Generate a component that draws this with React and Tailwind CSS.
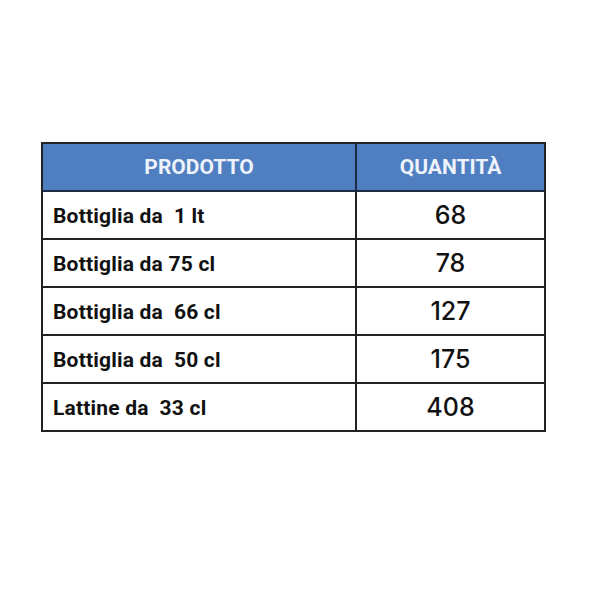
import React from 'react';

const rows = [
  { name: 'Bottiglia da  1 lt', qty: '68' },
  { name: 'Bottiglia da 75 cl', qty: '78' },
  { name: 'Bottiglia da  66 cl', qty: '127' },
  { name: 'Bottiglia da  50 cl', qty: '175' },
  { name: 'Lattine da  33 cl', qty: '408' },
];

const App = () => {
  return (
    <div className="w-[600px] h-[600px] bg-white pt-[142px] pl-[41px]">
      <div className="w-[505px] border-2 border-[#222] grid grid-cols-[314px_1fr]">
        <div className="h-[48px] pt-[2px] bg-[#4f7fc0] border-r-2 border-b-2 border-[#1d2a44] flex items-center justify-center text-[#eef3fb] text-[21px] font-bold font-['Roboto',sans-serif] whitespace-pre">
          PRODOTTO
        </div>
        <div className="h-[48px] pt-[2px] bg-[#4f7fc0] border-b-2 border-[#1d2a44] flex items-center justify-center text-[#eef3fb] text-[21px] font-bold font-['Roboto',sans-serif]">
          QUANTITÀ
        </div>
        {rows.map((row, i) => {
          const last = i === rows.length - 1;
          return (
            <React.Fragment key={row.name}>
              <div
                className={`pt-[3px] border-r-2 border-[#222] flex items-center pl-[10px] text-[#111] text-[21px] font-bold font-['Roboto',sans-serif] tracking-[0.2px] whitespace-pre ${
                  last ? 'h-[46px]' : 'h-[48px] border-b-2'
                }`}
              >
                {row.name}
              </div>
              <div
                className={`pt-[2px] border-[#222] flex items-center justify-center text-[#111] text-[25px] font-medium font-['Inter',sans-serif] ${
                  last ? 'h-[46px]' : 'h-[48px] border-b-2'
                }`}
              >
                {row.qty}
              </div>
            </React.Fragment>
          );
        })}
      </div>
    </div>
  );
};

export default App;
